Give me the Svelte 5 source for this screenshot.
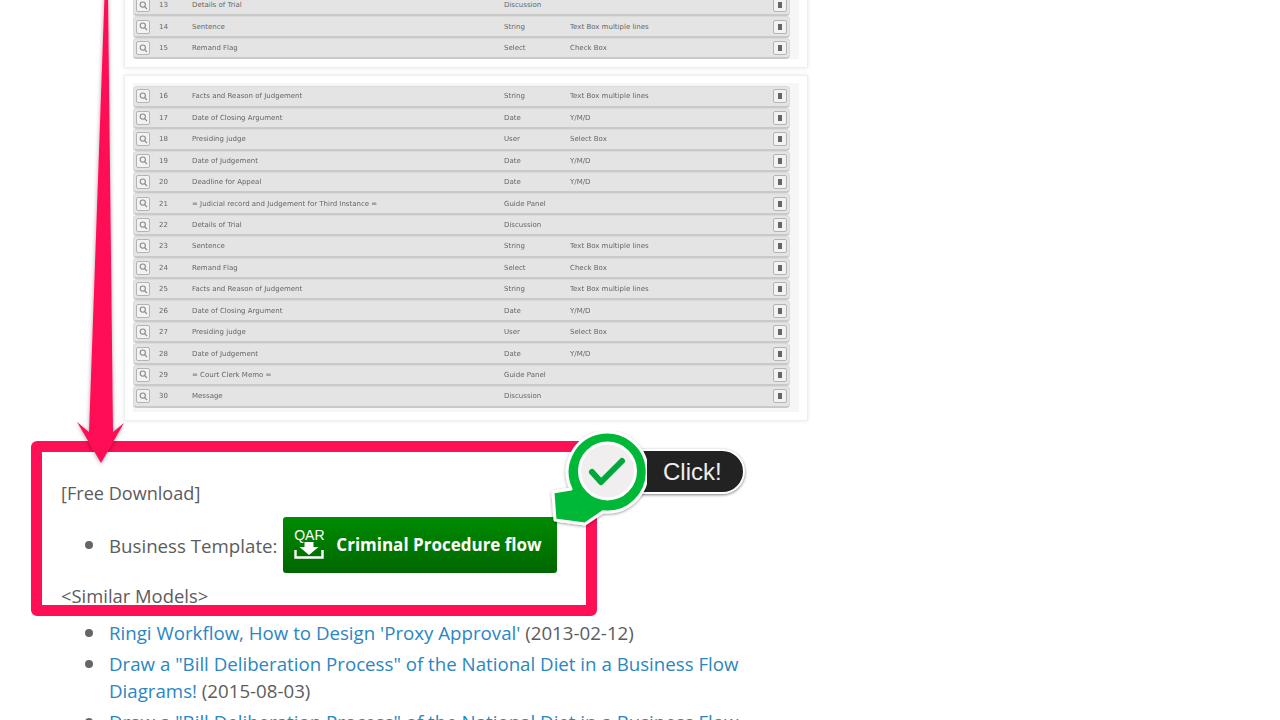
<script>
	const rows1 = [
		[13, 'Details of Trial', 'Discussion', ''],
		[14, 'Sentence', 'String', 'Text Box multiple lines'],
		[15, 'Remand Flag', 'Select', 'Check Box']
	];
	const rows2 = [
		[16, 'Facts and Reason of Judgement', 'String', 'Text Box multiple lines'],
		[17, 'Date of Closing Argument', 'Date', 'Y/M/D'],
		[18, 'Presiding judge', 'User', 'Select Box'],
		[19, 'Date of Judgement', 'Date', 'Y/M/D'],
		[20, 'Deadline for Appeal', 'Date', 'Y/M/D'],
		[21, '= Judicial record and Judgement for Third Instance =', 'Guide Panel', ''],
		[22, 'Details of Trial', 'Discussion', ''],
		[23, 'Sentence', 'String', 'Text Box multiple lines'],
		[24, 'Remand Flag', 'Select', 'Check Box'],
		[25, 'Facts and Reason of Judgement', 'String', 'Text Box multiple lines'],
		[26, 'Date of Closing Argument', 'Date', 'Y/M/D'],
		[27, 'Presiding judge', 'User', 'Select Box'],
		[28, 'Date of Judgement', 'Date', 'Y/M/D'],
		[29, '= Court Clerk Memo =', 'Guide Panel', ''],
		[30, 'Message', 'Discussion', '']
	];
	const panels = [rows1, rows2];
</script>

<div class="page">
	<div class="shot">
		{#each panels as rows, p}
			<div class="panel" class:first={p === 0}>
				<div class="inner">
					{#each rows as r}
						<div class="row">
							<span class="btn">
								<svg width="9" height="9" viewBox="0 0 9 9" fill="none" stroke="#8a8a8a" stroke-width="1.1">
									<circle cx="3.8" cy="3.6" r="2.6" />
									<path d="M5.6 5.6 8 8" />
								</svg>
							</span>
							<span class="num">{r[0]}</span>
							<span class="name">{r[1]}</span>
							<span class="type">{r[2]}</span>
							<span class="ctl">{r[3]}</span>
							<span class="btn trash"><i></i></span>
						</div>
					{/each}
				</div>
			</div>
		{/each}
	</div>

	<div class="body">
		<p class="head">[Free Download]</p>
		<ul class="tpl">
			<li>
				<span>Business Template:</span>
				<a class="dl" href="#dl">
					<span class="qar">
						<b>QAR</b>
						<svg width="30" height="17" viewBox="0 0 30 17">
							<path d="M10.500 0h9v5h5L15 13 5.500 5h5z" fill="#fff" />
							<path d="M1.500 8v7.500h27V8" fill="none" stroke="#fff" stroke-width="2.400" />
						</svg>
					</span>
					Criminal Procedure flow
				</a>
			</li>
		</ul>
		<p class="similar">&lt;Similar Models&gt;</p>
		<ul class="links">
			<li><a href="#a">Ringi Workflow, How to Design 'Proxy Approval'</a> (2013-02-12)</li>
			<li><a href="#b">Draw a "Bill Deliberation Process" of the National Diet in a Business Flow Diagrams!</a> (2015-08-03)</li>
			<li><a href="#c">Draw a "Bill Deliberation Process" of the National Diet in a Business Flow</a></li>
		</ul>
	</div>

	<div class="frame"></div>

	<svg class="arrow" width="80" height="480" viewBox="0 0 80 480">
		<defs>
			<filter id="sh" x="-30%" y="-5%" width="160%" height="110%">
				<feDropShadow dx="0" dy="1" stdDeviation="2" flood-color="#000" flood-opacity="0.35" />
			</filter>
		</defs>
		<path d="M44.500 -4H48L53 432L64 423L41 463L17 422L29 432Z" fill="#ff0f55" filter="url(#sh)" />
	</svg>

	<div class="click">
		<span class="pill">Click!</span>
		<svg class="pin" width="104" height="104" viewBox="0 0 104 104">
			<defs>
				<filter id="ps" x="-10%" y="-10%" width="120%" height="120%">
					<feDropShadow dx="0" dy="1" stdDeviation="1.500" flood-color="#000" flood-opacity="0.4" />
				</filter>
			</defs>
			<path d="M28 58A40 40 0 1 1 60 80.800L42 93L12 89L10 61Z" fill="#00b837" stroke="#fff" stroke-width="3" stroke-linejoin="round" filter="url(#ps)" />
			<circle cx="64.500" cy="40" r="28" fill="#f1eeef" stroke="#fff" stroke-width="3" />
			<path d="M49 41 58 51 79 30" fill="none" stroke="#00a83a" stroke-width="6" stroke-linecap="round" stroke-linejoin="round" />
		</svg>
	</div>
</div>

<style>
	:global(body) {
		margin: 0;
		background: #fff;
	}
	.page {
		position: relative;
		width: 1280px;
		height: 720px;
		overflow: hidden;
		font-family: "Open Sans", "DejaVu Sans", sans-serif;
		color: #5c5c5c;
		font-size: 18.7px;
	}
	.shot {
		width: 684px;
		margin-left: 124px;
		display: flex;
		flex-direction: column;
		gap: 7px;
		margin-top: -6px;
		filter: blur(0.7px);
	}
	.panel {
		background: #fff;
		border: 1px solid #eee;
		box-shadow: 0 0 4px #e6e6e6;
		padding: 7px 8px 8px;
	}
	.panel.first {
		padding-top: 0;
		padding-bottom: 8px;
	}
	.inner {
		background: #f6f6f6;
		padding: 3px 0 4px;
	}
	.first .inner {
		padding: 0;
	}
	.row {
		height: 21.43px;
		box-sizing: border-box;
		background: #e4e4e4;
		border: 1px solid #dadada;
		border-bottom: 2px solid #c9c9c9;
		border-radius: 4px;
		display: flex;
		align-items: center;
		padding: 0 2px 0 2px;
		font: 7px "DejaVu Sans", sans-serif;
		color: #666;
		width: 657px;
	}
	.btn {
		width: 14px;
		height: 14px;
		box-sizing: border-box;
		background: #f2f2f2;
		border: 1.500px solid #b4b4b4;
		border-radius: 2px;
		display: flex;
		align-items: center;
		justify-content: center;
		flex: none;
	}
	.num {
		margin-left: 9px;
		width: 33px;
	}
	.name {
		width: 312px;
	}
	.type {
		width: 66px;
	}
	.ctl {
		flex: 1;
	}
	.trash i {
		width: 4px;
		height: 6px;
		background: #666;
	}
	.body {
		margin-top: 9px;
		padding-left: 61px;
		width: 690px;
	}
	.head {
		margin: 59px 0 0;
		line-height: 27px;
		font-size: 18.1px;
	}
	.tpl,
	.links {
		list-style: none;
		padding-left: 48px;
	}
	.tpl li,
	.links li {
		position: relative;
	}
	.tpl li::before,
	.links li::before {
		content: "";
		position: absolute;
		left: -24px;
		top: 10px;
		width: 8px;
		height: 8px;
		border-radius: 50%;
		background: #666;
	}
	.tpl {
		margin: 0;
	}
	.tpl li {
		margin-top: 10px;
	}
	.tpl li::before {
		top: 24px;
	}
	.tpl li > span {
		vertical-align: middle;
	}
	.dl {
		display: inline-flex;
		align-items: center;
		vertical-align: middle;
		width: 274px;
		height: 56px;
		box-sizing: border-box;
		margin-left: 1px;
		padding-left: 11px;
		gap: 12px;
		border-radius: 3px;
		background: linear-gradient(#008c00, #006600);
		color: #fff;
		font-weight: 700;
		font-size: 17px;
		text-decoration: none;
		white-space: nowrap;
	}
	.qar {
		display: flex;
		flex-direction: column;
		align-items: center;
		width: 30px;
	}
	.qar b {
		font: 500 14px/14px "Liberation Sans", sans-serif;
		margin-top: -2px;
	}
	.similar {
		margin: 9px 0 0;
		line-height: 27px;
		font-size: 18.4px;
	}
	.links {
		margin: 10px 0 0;
		line-height: 27px;
	}
	.links li {
		margin-bottom: 4px;
	}
	.links a {
		color: #2b86c2;
		text-decoration: none;
	}
	.frame {
		position: absolute;
		left: 31px;
		top: 441px;
		width: 566px;
		height: 175px;
		box-sizing: border-box;
		border: 11px solid #ff0f55;
		border-radius: 6px;
		pointer-events: none;
	}
	.arrow {
		position: absolute;
		left: 60px;
		top: 0;
	}
	.click {
		position: absolute;
		left: 0;
		top: 0;
	}
	.pill {
		position: absolute;
		left: 620px;
		top: 449px;
		width: 125px;
		height: 45px;
		box-sizing: border-box;
		padding-left: 41px;
		border: 2px solid #fff;
		border-radius: 23px;
		background: #222;
		box-shadow: 0 1px 3px rgba(0, 0, 0, 0.5);
		color: #eee;
		font: 24px/41px "Liberation Sans", sans-serif;
	}
	.pin {
		position: absolute;
		left: 543px;
		top: 431px;
	}
</style>
